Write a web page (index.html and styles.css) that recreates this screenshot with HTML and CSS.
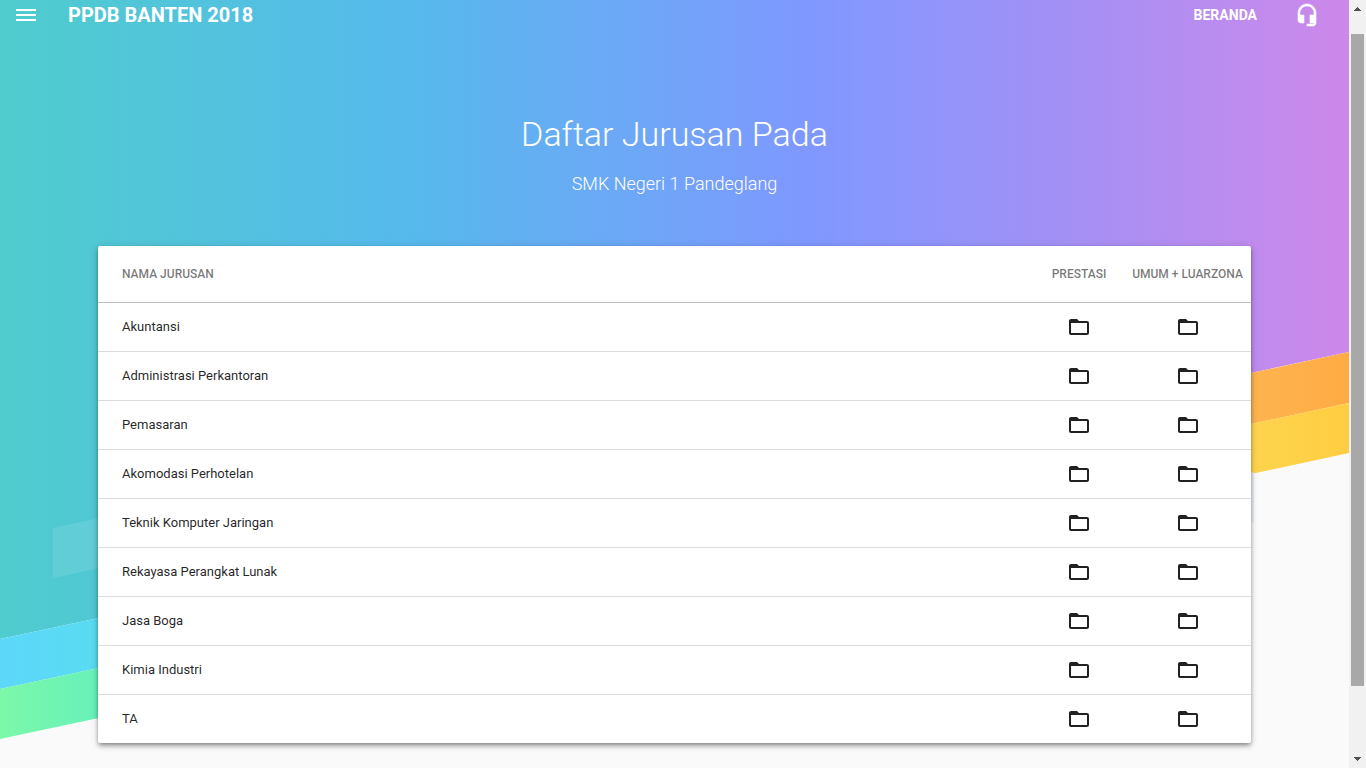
FILE: index.html
```
<!DOCTYPE html>
<html lang="id">
<head>
<meta charset="utf-8">
<title>PPDB Banten 2018</title>
<link rel="stylesheet" href="styles.css">
</head>
<body>
<svg class="defs" aria-hidden="true">
  <symbol id="folder" viewBox="0 0 24 24"><path d="M20 6h-8l-2-2H4c-1.100 0-1.990.9-1.990 2L2 18c0 1.100.9 2 2 2h16c1.100 0 2-.9 2-2V8c0-1.100-.9-2-2-2zm0 12H4V8h16v10z"/></symbol>
</svg>
<div class="window">
  <div class="page">
    <svg class="stripes" viewBox="0 0 1349 768" preserveAspectRatio="none" aria-hidden="true">
      <defs>
        <linearGradient id="sky" gradientUnits="userSpaceOnUse" x1="0" y1="0" x2="1349" y2="0">
          <stop offset="0" stop-color="#4fcccd"/>
          <stop offset=".3" stop-color="#56baec"/>
          <stop offset=".6" stop-color="#7f98ff"/>
          <stop offset="1" stop-color="#cd88ea"/>
        </linearGradient>
        <linearGradient id="green" gradientUnits="userSpaceOnUse" x1="0" y1="0" x2="98" y2="0">
          <stop offset="0" stop-color="#7cf8a8"/><stop offset="1" stop-color="#67f1ba"/>
        </linearGradient>
        <linearGradient id="blue" gradientUnits="userSpaceOnUse" x1="0" y1="0" x2="98" y2="0">
          <stop offset="0" stop-color="#5dd7fa"/><stop offset="1" stop-color="#59dbf1"/>
        </linearGradient>
        <linearGradient id="orange" gradientUnits="userSpaceOnUse" x1="1251" y1="0" x2="1349" y2="0">
          <stop offset="0" stop-color="#feb450"/><stop offset="1" stop-color="#ffab43"/>
        </linearGradient>
        <linearGradient id="yellow" gradientUnits="userSpaceOnUse" x1="1251" y1="0" x2="1349" y2="0">
          <stop offset="0" stop-color="#fdd44e"/><stop offset="1" stop-color="#ffcd41"/>
        </linearGradient>
      </defs>
      <path fill="url(#sky)" d="M0 0H1349V352L0 639Z"/>
      <path fill="#fff" fill-opacity=".1" d="M53 528L450 443V493L53 578Z"/>
      <path fill="url(#blue)" d="M0 639L450 543V593L0 689Z"/>
      <path fill="url(#green)" d="M0 689L450 593V643L0 739Z"/>
      <path fill="url(#orange)" d="M900 448L1349 352V403L900 499Z"/>
      <path fill="url(#yellow)" d="M900 499L1349 403V453L900 549Z"/>
      <path fill="#e8eefa" d="M900 547L1254 472V522L900 597Z"/>
    </svg>
    <header class="bar">
      <button class="icon-button" type="button" aria-label="Menu">
        <svg class="icon" viewBox="0 0 24 24"><path d="M2 18h20v-2H2v2zm0-5h20v-2H2v2zm0-7v2h20V6H2z"/></svg>
      </button>
      <span class="brand">PPDB BANTEN 2018</span>
      <nav class="links">
        <a class="link" href="#">BERANDA</a>
        <a class="support" href="#" aria-label="Bantuan">
          <svg class="icon heavy" viewBox="0 0 24 24"><path d="M12 1c-4.970 0-9 4.030-9 9v7c0 1.660 1.340 3 3 3h3v-8H5v-2c0-3.870 3.130-7 7-7s7 3.130 7 7v2h-4v8h4v1h-7v2h6c1.660 0 3-1.340 3-3V10c0-4.970-4.030-9-9-9z"/></svg>
        </a>
      </nav>
    </header>
    <main class="content">
      <h1 class="title">Daftar Jurusan Pada</h1>
      <p class="subtitle">SMK Negeri 1 Pandeglang</p>
      <table class="card">
        <thead>
          <tr><th class="name">NAMA JURUSAN</th><th class="prestasi">PRESTASI</th><th class="umum">UMUM + LUARZONA</th></tr>
        </thead>
        <tbody>
          <tr><td class="name">Akuntansi</td><td><a class="folder" href="#" aria-label="Prestasi"><svg class="icon"><use href="#folder"/></svg></a></td><td><a class="folder" href="#" aria-label="Umum"><svg class="icon"><use href="#folder"/></svg></a></td></tr>
          <tr><td class="name">Administrasi Perkantoran</td><td><a class="folder" href="#" aria-label="Prestasi"><svg class="icon"><use href="#folder"/></svg></a></td><td><a class="folder" href="#" aria-label="Umum"><svg class="icon"><use href="#folder"/></svg></a></td></tr>
          <tr><td class="name">Pemasaran</td><td><a class="folder" href="#" aria-label="Prestasi"><svg class="icon"><use href="#folder"/></svg></a></td><td><a class="folder" href="#" aria-label="Umum"><svg class="icon"><use href="#folder"/></svg></a></td></tr>
          <tr><td class="name">Akomodasi Perhotelan</td><td><a class="folder" href="#" aria-label="Prestasi"><svg class="icon"><use href="#folder"/></svg></a></td><td><a class="folder" href="#" aria-label="Umum"><svg class="icon"><use href="#folder"/></svg></a></td></tr>
          <tr><td class="name">Teknik Komputer Jaringan</td><td><a class="folder" href="#" aria-label="Prestasi"><svg class="icon"><use href="#folder"/></svg></a></td><td><a class="folder" href="#" aria-label="Umum"><svg class="icon"><use href="#folder"/></svg></a></td></tr>
          <tr><td class="name">Rekayasa Perangkat Lunak</td><td><a class="folder" href="#" aria-label="Prestasi"><svg class="icon"><use href="#folder"/></svg></a></td><td><a class="folder" href="#" aria-label="Umum"><svg class="icon"><use href="#folder"/></svg></a></td></tr>
          <tr><td class="name">Jasa Boga</td><td><a class="folder" href="#" aria-label="Prestasi"><svg class="icon"><use href="#folder"/></svg></a></td><td><a class="folder" href="#" aria-label="Umum"><svg class="icon"><use href="#folder"/></svg></a></td></tr>
          <tr><td class="name">Kimia Industri</td><td><a class="folder" href="#" aria-label="Prestasi"><svg class="icon"><use href="#folder"/></svg></a></td><td><a class="folder" href="#" aria-label="Umum"><svg class="icon"><use href="#folder"/></svg></a></td></tr>
          <tr><td class="name">TA</td><td><a class="folder" href="#" aria-label="Prestasi"><svg class="icon"><use href="#folder"/></svg></a></td><td><a class="folder" href="#" aria-label="Umum"><svg class="icon"><use href="#folder"/></svg></a></td></tr>
        </tbody>
      </table>
    </main>
  </div>
  <div class="scrollbar" aria-hidden="true">
    <svg class="arrow" viewBox="0 0 17 17" shape-rendering="crispEdges"><path d="M8 7h1v1h1v1h1v1h1v1H5v-1h1V9h1V8h1z"/></svg>
    <div class="track"><div class="thumb"></div></div>
    <svg class="arrow" viewBox="0 0 17 17" shape-rendering="crispEdges"><path d="M5 6h7v1h-1v1h-1v1H9v1H8V9H7V8H6V7H5z"/></svg>
  </div>
</div>
</body>
</html>
```

FILE: styles.css
```
* { box-sizing: border-box; }

body {
  margin: 0;
  background: #fafafa;
  color: rgba(0, 0, 0, 0.87);
  font: 13px/20px Roboto, "Liberation Sans", sans-serif;
}

a { color: inherit; text-decoration: none; }

.defs { display: none; }

.window {
  display: grid;
  grid-template-columns: minmax(0, 1fr) 17px;
  min-height: 100vh;
}

.page {
  position: relative;
  isolation: isolate;
}

.stripes {
  position: absolute;
  inset: 0;
  z-index: -1;
  width: 100%;
  height: 100%;
}

.icon {
  display: block;
  width: 24px;
  height: 24px;
  fill: currentColor;
}

.heavy {
  stroke: currentColor;
  stroke-width: 0.6;
}

.bar {
  display: flex;
  align-items: center;
  height: 30px;
  padding: 0 30px 0 14px;
  color: #fff;
}

.icon-button {
  padding: 0;
  border: 0;
  background: none;
  color: inherit;
}

.brand {
  margin-left: 30px;
  font-size: 20px;
  font-weight: 700;
}

.links {
  display: flex;
  align-items: center;
  gap: 38px;
  margin-left: auto;
}

.link {
  font-size: 14px;
  font-weight: 700;
}

.content {
  padding: 80px 98px 25px;
  text-align: center;
}

.title {
  margin: 0;
  color: #fff;
  font-size: 34px;
  font-weight: 300;
  line-height: 48px;
}

.subtitle {
  margin: 14px 0 50px;
  color: #fff;
  font-size: 18px;
  font-weight: 300;
  line-height: 24px;
}

.card {
  width: 100%;
  table-layout: fixed;
  border-collapse: separate;
  border-spacing: 0;
  border-radius: 2px;
  background: #fff;
  box-shadow: 0 2px 4px -1px rgba(0, 0, 0, 0.4), 0 1px 10px rgba(0, 0, 0, 0.12), 0 4px 5px rgba(0, 0, 0, 0.14);
}

th {
  height: 57px;
  padding: 0;
  border-bottom: 1px solid #bdbdbd;
  color: rgba(0, 0, 0, 0.54);
  font-size: 12px;
  font-weight: 500;
}

td {
  height: 49px;
  padding: 0;
  border-bottom: 1px solid #dcdcdc;
}

tbody tr:last-child td {
  height: 48px;
  border-bottom: 0;
}

.name {
  padding-left: 24px;
  text-align: left;
}

.prestasi { width: 90px; }
.umum { width: 127px; }

.folder {
  display: inline-block;
  vertical-align: middle;
}

.scrollbar {
  display: flex;
  flex-direction: column;
  background: #f1f1f1;
}

.arrow {
  height: 17px;
  fill: #505050;
}

.track {
  flex: 1;
  padding: 17px 2px 65px;
}

.thumb {
  height: 100%;
  background: #a8a8a8;
}
```
